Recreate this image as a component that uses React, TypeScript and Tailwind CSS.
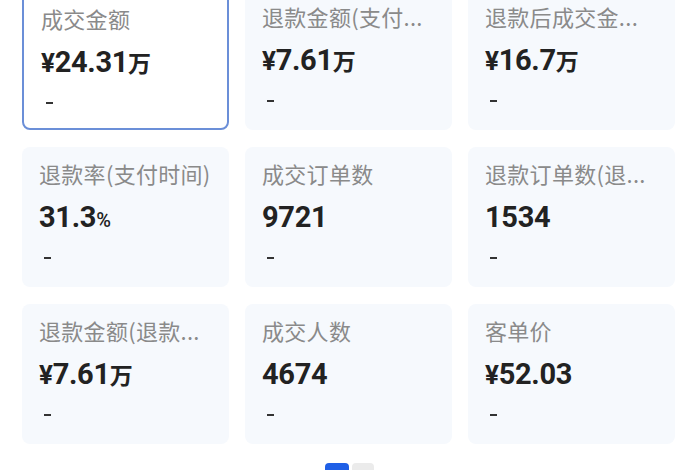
import React from "react";

interface Metric {
  title: string;
  prefix?: string;
  value: string;
  unit?: string;
  active?: boolean;
}

const metrics: Metric[] = [
  { title: "成交金额", prefix: "¥", value: "24.31", unit: "万", active: true },
  { title: "退款金额(支付...", prefix: "¥", value: "7.61", unit: "万" },
  { title: "退款后成交金...", prefix: "¥", value: "16.7", unit: "万" },
  { title: "退款率(支付时间)", value: "31.3", unit: "%" },
  { title: "成交订单数", value: "9721" },
  { title: "退款订单数(退...", value: "1534" },
  { title: "退款金额(退款...", prefix: "¥", value: "7.61", unit: "万" },
  { title: "成交人数", value: "4674" },
  { title: "客单价", prefix: "¥", value: "52.03" },
];

const cjk = "font-['Noto_Sans_CJK_SC',sans-serif]";
const num = "font-['Roboto','Noto_Sans_CJK_SC',sans-serif]";

const MetricCard = ({ title, prefix, value, unit, active }: Metric) => (
  <div
    className={`h-[140px] rounded-[8px] px-[17px] pt-[11px] flex flex-col ${
      active ? "bg-white border-2 border-[#6b8fd8] px-[15px] pt-[9px]" : "bg-[#f6f9fd]"
    }`}
  >
    <div className={`${cjk} text-[22px] leading-[30px] text-[#8a8a8a] whitespace-nowrap tracking-[0.3px]`}>
      {title}
    </div>
    <div className={`${num} mt-[11px] h-[36px] flex items-baseline font-bold text-[#222] tracking-[-0.3px]`}>
      {prefix && <span className="text-[26px]">{prefix}</span>}
      <span className="text-[29px] leading-[36px]">{value}</span>
      {unit && (
        <span
          className={
            unit === "%"
              ? `${num} font-medium text-[20px]`
              : `${cjk} font-semibold text-[23px]`
          }
        >
          {unit}
        </span>
      )}
    </div>
    <div className="mt-[11px] pl-[5px] h-[24px] flex items-center">
      <span className="block w-[7px] h-[2px] bg-[#333]" />
    </div>
  </div>
);

export default function App() {
  return (
    <div className="w-[700px] h-[470px] overflow-hidden bg-white">
      <div className="-mt-[10px] pl-[22px]">
        <div className="grid grid-cols-[207px_207px_207px] gap-x-[16px] gap-y-[17px]">
          {metrics.map((m, i) => (
            <MetricCard key={i} {...m} />
          ))}
        </div>
        <div className="mt-[19px] flex gap-[3px] pl-[303px]">
          <span className="block w-[24px] h-[10px] rounded-[4px] bg-[#1f5fe6]" />
          <span className="block w-[22px] h-[10px] rounded-[4px] bg-[#ebebeb]" />
        </div>
      </div>
    </div>
  );
}
